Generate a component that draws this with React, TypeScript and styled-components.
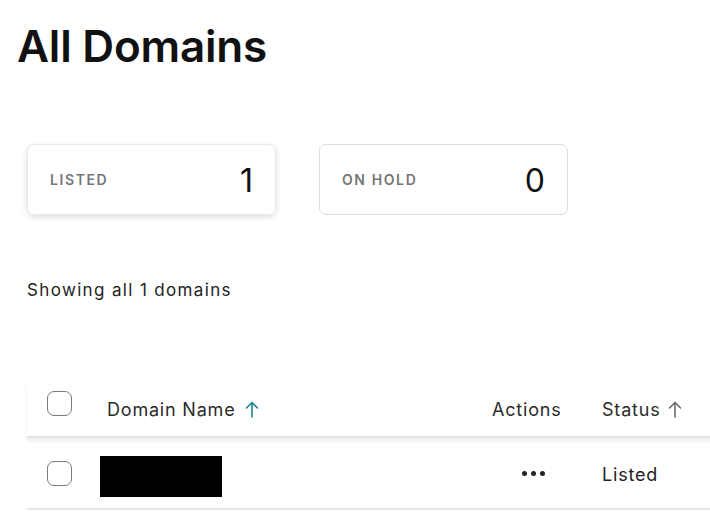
import React from "react";
import styled, { createGlobalStyle } from "styled-components";

const Global = createGlobalStyle`
  html, body { margin: 0; padding: 0; background: #fff; overflow: hidden; }
  body { font-family: Inter, "Open Sans", Arial, sans-serif; color: #111; }
`;

const Page = styled.div`
  width: 710px;
  height: 521px;
  overflow: hidden;
  padding: 0 0 0 27px;
  box-sizing: border-box;
`;

const Title = styled.h1`
  margin: 0 0 0 -10px;
  padding-top: 20px;
  font-size: 44px;
  line-height: 52px;
  font-weight: 600;
  letter-spacing: -0.2px;
  color: #111;
`;

const Cards = styled.div`
  display: flex;
  gap: 43px;
  margin-top: 72px;
`;

const Card = styled.div<{ $active?: boolean }>`
  width: 249px;
  height: 71px;
  box-sizing: border-box;
  border: 1px solid ${(p) => (p.$active ? "#e6e9ee" : "#d9dee5")};
  border-radius: 7px;
  box-shadow: ${(p) => (p.$active ? "0 2px 6px rgba(0,0,0,0.14)" : "none")};
  display: flex;
  align-items: center;
  justify-content: space-between;
  padding: 0 22px 0 22px;
`;

const CardLabel = styled.span`
  font-size: 14px;
  font-weight: 600;
  letter-spacing: 1.6px;
  color: #767676;
`;

const CardValue = styled.span`
  font-size: 32px;
  font-weight: 400;
  color: #111;
  margin-top: 2px;
`;

const Summary = styled.p`
  margin: 65px 0 0 0;
  font-size: 17px;
  line-height: 20px;
  letter-spacing: 1.35px;
  color: #222;
`;

const Table = styled.div`
  margin-top: 80px;
  width: 820px;
`;

const Row = styled.div<{ $head?: boolean }>`
  display: grid;
  grid-template-columns: 80px 385px 110px 245px;
  align-items: center;
  height: ${(p) => (p.$head ? "56px" : "70px")};
  border-bottom: 2px solid ${(p) => (p.$head ? "#e2e2e2" : "#e6e6e6")};
  box-shadow: ${(p) => (p.$head ? "0 3px 4px rgba(0,0,0,0.07)" : "none")};
  position: relative;
  z-index: ${(p) => (p.$head ? 1 : 0)};
`;

const CheckCell = styled.div<{ $head?: boolean }>`
  padding-left: 20px;
  display: flex;
  align-items: center;
  margin-top: ${(p) => (p.$head ? "-9px" : "0")};
`;

const Checkbox = styled.span`
  display: block;
  width: 25px;
  height: 25px;
  box-sizing: border-box;
  border: 1.5px solid #7a7a7a;
  border-radius: 7px;
  background: #fff;
`;

const HeadCell = styled.div<{ $gap?: number }>`
  display: flex;
  align-items: center;
  gap: ${(p) => p.$gap ?? 6}px;
  font-size: 18px;
  letter-spacing: 0.8px;
  color: #2b2b2b;
  margin-top: 2px;
`;

const Redacted = styled.div`
  width: 122px;
  height: 41px;
  background: #000;
  margin-top: 7px;
  margin-left: -7px;
`;

const Dots = styled.div`
  padding-left: 30px;
  display: flex;
  gap: 4px;
  align-items: center;
`;

const Dot = styled.span`
  width: 5px;
  height: 5px;
  border-radius: 50%;
  background: #222;
`;

const StatusText = styled.div`
  font-size: 18px;
  letter-spacing: 0.8px;
  color: #222;
  margin-top: 2px;
`;

const Arrow = ({ color }: { color: string }) => (
  <svg width="14" height="17" viewBox="0 0 14 17" fill="none" stroke={color} strokeWidth="1.6" strokeLinecap="round" strokeLinejoin="round">
    <path d="M7 16V1.5" />
    <path d="M1.5 7L7 1.5L12.5 7" />
  </svg>
);

export default function App() {
  return (
    <>
      <Global />
      <Page>
        <Title>All Domains</Title>
        <Cards>
          <Card $active>
            <CardLabel>LISTED</CardLabel>
            <CardValue>1</CardValue>
          </Card>
          <Card>
            <CardLabel>ON HOLD</CardLabel>
            <CardValue>0</CardValue>
          </Card>
        </Cards>
        <Summary>Showing all 1 domains</Summary>
        <Table>
          <Row $head>
            <CheckCell $head>
              <Checkbox />
            </CheckCell>
            <HeadCell $gap={10}>
              Domain Name <Arrow color="#1d8493" />
            </HeadCell>
            <HeadCell>Actions</HeadCell>
            <HeadCell $gap={8}>
              Status <Arrow color="#6b6b6b" />
            </HeadCell>
          </Row>
          <Row>
            <CheckCell>
              <Checkbox />
            </CheckCell>
            <Redacted />
            <Dots>
              <Dot />
              <Dot />
              <Dot />
            </Dots>
            <StatusText>Listed</StatusText>
          </Row>
        </Table>
      </Page>
    </>
  );
}
